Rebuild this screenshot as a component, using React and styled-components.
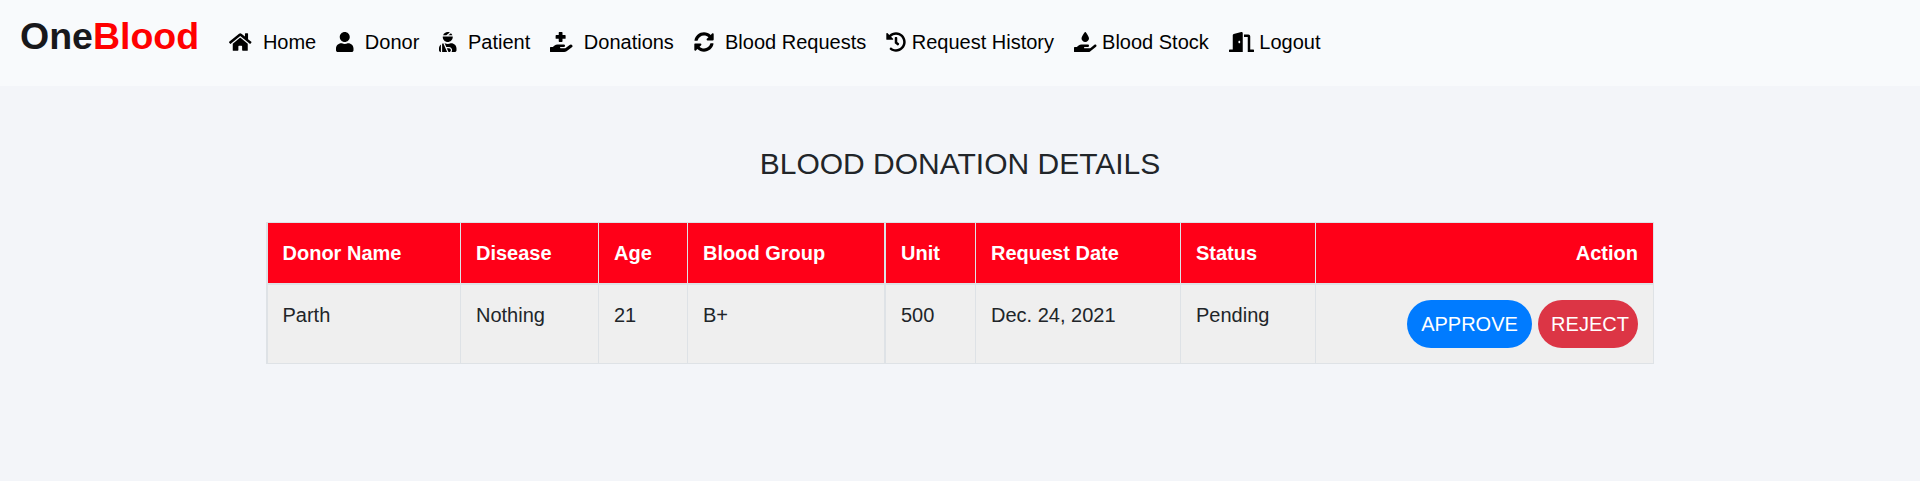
import React from "react";
import styled, { createGlobalStyle } from "styled-components";
import { FaHome, FaUser, FaUserInjured, FaHandHoldingMedical, FaSyncAlt, FaHistory, FaHandHoldingWater, FaDoorOpen } from "react-icons/fa";

const Global = createGlobalStyle`
  * { box-sizing: border-box; }
  body { margin: 0; background: #f3f5f9; color: #212529; font: 20px/30px "Liberation Sans", Arial, sans-serif; }
`;
const Navbar = styled.nav`
  display: flex; align-items: center; height: 86px; padding: 0 20px; background: #f8fafc;
`;
const Brand = styled.a`
  font-size: 37.5px; font-weight: 700; line-height: 56px; margin: 0 20.1px 14px 0; color: #18181b;
  span { color: #f00; }
`;
const Menu = styled.ul`
  display: flex; list-style: none; margin: 0 0 2px; padding: 0;
`;
const Item = styled.li`
  display: flex; align-items: center; padding: 0 10px; color: #000; white-space: nowrap;
  svg { width: ${(p) => p.$w}px; height: 20px; margin-right: ${(p) => p.$gap}px; }
`;
const Title = styled.h4`
  margin: 60px 0 40px; font-size: 30px; font-weight: 400; line-height: 36px; text-align: center;
`;
const Table = styled.table`
  width: 1388px; margin: 0 auto; table-layout: fixed; border-collapse: separate; border-spacing: 0;
  border: solid #dee2e6; border-width: 1px 0 0 2px; background: #efefef;
`;
const Th = styled.th`
  width: ${(p) => (p.$w ? `${p.$w}px` : "auto")}; height: 62px; padding: 15px; background: #ff0018; color: #fff;
  border: solid #dee2e6; border-width: 0 ${(p) => (p.$thick ? 2 : 1)}px 2px 0;
  text-align: ${(p) => p.$align || "left"};
  &:first-child { padding-left: 14.5px; }
`;
const Td = styled.td`
  height: 79px; padding: 15px; vertical-align: top;
  border: solid #dee2e6; border-width: 0 ${(p) => (p.$thick ? 2 : 1)}px 1px 0;
  &:first-child { padding-left: 14.5px; }
`;
const Actions = styled.div`
  display: flex; justify-content: flex-end; gap: 6px;
`;
const Button = styled.button`
  height: 48px; width: ${(p) => p.$w}px; padding: 0 0 0 ${(p) => p.$indent || 0}px; border: 0; border-radius: 25px;
  background: ${(p) => p.$bg}; color: #fff; font: inherit;
`;

const items = [
  ["Home", FaHome, 22.5, 11.12], ["Donor", FaUser, 17.5, 11.12], ["Patient", FaUserInjured, 17.5, 11.12],
  ["Donations", FaHandHoldingMedical, 22.5, 11.12], ["Blood Requests", FaSyncAlt, 20, 11.12],
  ["Request History", FaHistory, 20, 5.56], ["Blood Stock", FaHandHoldingWater, 22.5, 5.56], ["Logout", FaDoorOpen, 25, 5.56],
];
const columns = [
  { label: "Donor Name", width: 193, value: "Parth" },
  { label: "Disease", width: 138, value: "Nothing" },
  { label: "Age", width: 89, value: "21" },
  { label: "Blood Group", width: 198, value: "B+", thick: true },
  { label: "Unit", width: 90, value: "500" },
  { label: "Request Date", width: 205, value: "Dec. 24, 2021" },
  { label: "Status", width: 135, value: "Pending" },
];

export default function App() {
  return (
    <>
      <Global />
      <Navbar>
        <Brand>One<span>Blood</span></Brand>
        <Menu>
          {items.map(([label, Icon, w, gap]) => <Item key={label} $w={w} $gap={gap}><Icon />{label}</Item>)}
        </Menu>
      </Navbar>
      <Title>BLOOD DONATION DETAILS</Title>
      <Table>
        <thead><tr>
          {columns.map((c) => <Th key={c.label} $w={c.width} $thick={c.thick}>{c.label}</Th>)}
          <Th $align="right">Action</Th>
        </tr></thead>
        <tbody><tr>
          {columns.map((c) => <Td key={c.label} $thick={c.thick}>{c.value}</Td>)}
          <Td>
            <Actions>
              <Button $w={125} $bg="#007bff">APPROVE</Button>
              <Button $w={100} $bg="#dc3545" $indent={4}>REJECT</Button>
            </Actions>
          </Td>
        </tr></tbody>
      </Table>
    </>
  );
}
